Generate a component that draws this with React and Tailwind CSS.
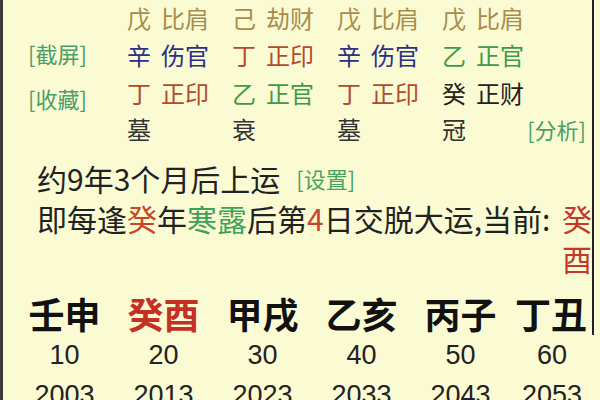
import React from 'react';

const gold = 'text-[#a98c4c]';
const blue = 'text-[#2b2f86]';
const red = 'text-[#b24a2e]';
const green = 'text-[#3e9a48]';
const dark = 'text-[#222]';

const rows = [
  { h: 'h-[36px]', cells: [['戊', '比肩', gold], ['己', '劫财', gold], ['戊', '比肩', gold], ['戊', '比肩', gold]] },
  { h: 'h-[38px]', cells: [['辛', '伤官', blue], ['丁', '正印', red], ['辛', '伤官', blue], ['乙', '正官', green]] },
  { h: 'h-[38px]', cells: [['丁', '正印', red], ['乙', '正官', green], ['丁', '正印', red], ['癸', '正财', dark]] },
];

const dayun = [
  { gz: '壬申', age: 10, year: 2003 },
  { gz: '癸酉', age: 20, year: 2013, now: true },
  { gz: '甲戌', age: 30, year: 2023 },
  { gz: '乙亥', age: 40, year: 2033 },
  { gz: '丙子', age: 50, year: 2043 },
  { gz: '丁丑', age: 60, year: 2053 },
];

export default function App() {
  return (
    <div className="w-[600px] h-[400px] overflow-hidden bg-[#fafbd3] border-l-[3px] border-[#3a3a3a] font-['Noto_Sans_CJK_SC',sans-serif] text-[#222]">
      <div className="w-[591px] border-r-2 border-[#222]">
        {/* 四柱 */}
        <div className="flex">
          <div className="w-[124px] pl-[25px] pt-[39px] flex flex-col text-[22px] leading-[28px] text-[#4c9e68]">
            <span>[截屏]</span>
            <span className="mt-[17px]">[收藏]</span>
          </div>
          <div className="flex-1 flex flex-col text-[24px]">
            {rows.map((r, i) => (
              <div key={i} className={`flex items-center ${r.h}`}>
                {r.cells.map(([g, s, c], j) => (
                  <div key={j} className={`w-[105px] flex gap-[10px] ${c}`}>
                    <span>{g}</span>
                    <span>{s}</span>
                  </div>
                ))}
              </div>
            ))}
            <div className="flex items-center h-[34px] text-[#333]">
              <div className="w-[105px]">墓</div>
              <div className="w-[105px]">衰</div>
              <div className="w-[105px]">墓</div>
              <div>冠</div>
              <div className="ml-auto pr-[6px] text-[22px] text-[#4c9e68]">[分析]</div>
            </div>
          </div>
        </div>

        {/* 起运 */}
        <div className="mt-[12px] pl-[34px] text-[30px] leading-[40px]">
          <div className="flex items-center">
            <span>约9年3个月后上运</span>
            <span className="ml-[16px] text-[22px] text-[#47a45f]">[设置]</span>
          </div>
          <div className="flex">
            <span className="whitespace-nowrap">
              即每逢<span className="text-[#c8452a]">癸</span>年<span className="text-[#3aa35b]">寒露</span>后第<span className="text-[#c8452a]">4</span>日交脱大运,当前:
            </span>
            <span className="ml-auto flex flex-col text-[#c0392b]">
              <span>癸</span>
              <span>酉</span>
            </span>
          </div>
        </div>

        {/* 大运 */}
        <div className="mt-[13px] pl-[12px] grid grid-cols-[repeat(5,99px)_1fr] text-[36px] leading-[44px] font-bold">
          {dayun.map((d) => (
            <div key={d.gz} className={`text-center ${d.now ? 'text-[#c62f26]' : 'text-[#111]'}`}>{d.gz}</div>
          ))}
        </div>
      </div>
      <div className="pl-[12px] grid grid-cols-[repeat(5,99px)_1fr] w-[591px] text-[27px] leading-[40px] font-['Liberation_Sans',sans-serif] text-[#222]">
        {dayun.map((d) => (
          <div key={d.age} className="text-center">{d.age}</div>
        ))}
        {dayun.map((d) => (
          <div key={d.year} className="text-center">{d.year}</div>
        ))}
      </div>
    </div>
  );
}
